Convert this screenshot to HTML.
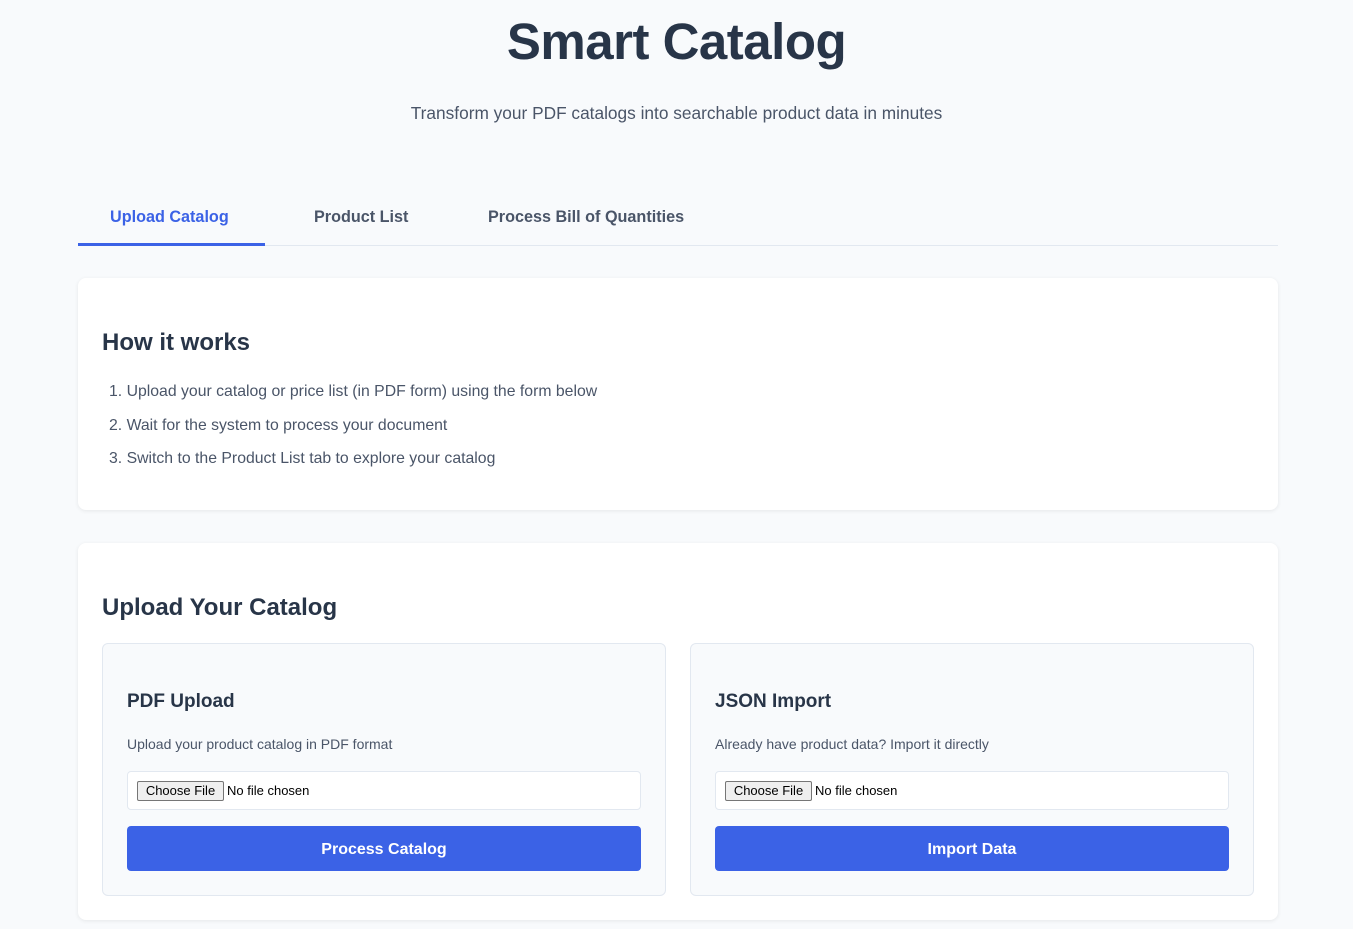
<!DOCTYPE html>
<html><head><style>
*{box-sizing:border-box;margin:0;padding:0}
body{width:1353px;height:929px;background:#f8fafc;font-family:"Liberation Sans",sans-serif;color:#1e293b;position:relative;overflow:hidden}
.a{position:absolute}
h1{position:absolute;left:0;width:1353px;top:12px;text-align:center;font-size:51px;font-weight:bold;color:#283548;letter-spacing:-0.5px}
.sub{left:0;width:1353px;top:103px;text-align:center;font-size:17.3px;color:#4a5568}
.tab{top:208px;font-size:16.2px;color:#4a5568;font-weight:bold}
.card{background:#fff;border-radius:8px;box-shadow:0 1px 4px rgba(0,0,0,0.08);left:78px;width:1200px}
.h2{font-size:24px;font-weight:bold;color:#283548}
.li{font-size:15.8px;color:#4a5568;left:109px}
.box{background:#f8fafc;border:1px solid #e2e8f0;border-radius:6px;top:643px;width:564px;height:253px}
.h3{font-size:19px;font-weight:bold;color:#283548;left:24px;top:47px}
.desc{font-size:14px;color:#4a5568;left:24px;top:92px}
.inp{left:24px;top:127px;width:514px;height:39px;background:#fff;border:1px solid #e2e8f0;border-radius:4px}
.cf{position:absolute;left:9px;top:9px;width:87px;height:20px;background:#efefef;border:1px solid #767676;border-radius:2px;font-size:13px;text-align:center;line-height:18px;color:#000}
.nf{position:absolute;left:99px;top:10px;font-size:13px;color:#000;line-height:18px}
.btn{left:24px;top:182px;width:514px;height:45px;background:#3b62e6;border-radius:4px;color:#fff;font-size:16px;font-weight:bold;text-align:center;line-height:47px}
</style></head><body>
<h1>Smart Catalog</h1>
<div class="a sub">Transform your PDF catalogs into searchable product data in minutes</div>
<div class="a tab" style="left:110px;color:#3b62e6">Upload Catalog</div>
<div class="a tab" style="left:314px">Product List</div>
<div class="a tab" style="left:488px">Process Bill of Quantities</div>
<div class="a" style="left:78px;top:245px;width:1200px;height:1px;background:#e2e8f0"></div>
<div class="a" style="left:78px;top:243px;width:187px;height:3px;background:#3b62e6"></div>
<div class="a card" style="top:278px;height:232px"></div>
<div class="a h2" style="left:102px;top:329px">How it works</div>
<div class="a li" style="top:383px">1. Upload your catalog or price list (in PDF form) using the form below</div>
<div class="a li" style="top:417px">2. Wait for the system to process your document</div>
<div class="a li" style="top:450px">3. Switch to the Product List tab to explore your catalog</div>
<div class="a card" style="top:543px;height:377px"></div>
<div class="a h2" style="left:102px;top:594px">Upload Your Catalog</div>
<div class="a box" style="left:102px">
<div class="a h3">PDF Upload</div>
<div class="a desc">Upload your product catalog in PDF format</div>
<div class="a inp"><div class="cf">Choose File</div><div class="nf">No file chosen</div></div>
<div class="a btn">Process Catalog</div>
</div>
<div class="a box" style="left:690px">
<div class="a h3">JSON Import</div>
<div class="a desc">Already have product data? Import it directly</div>
<div class="a inp"><div class="cf">Choose File</div><div class="nf">No file chosen</div></div>
<div class="a btn">Import Data</div>
</div>
</body></html>
